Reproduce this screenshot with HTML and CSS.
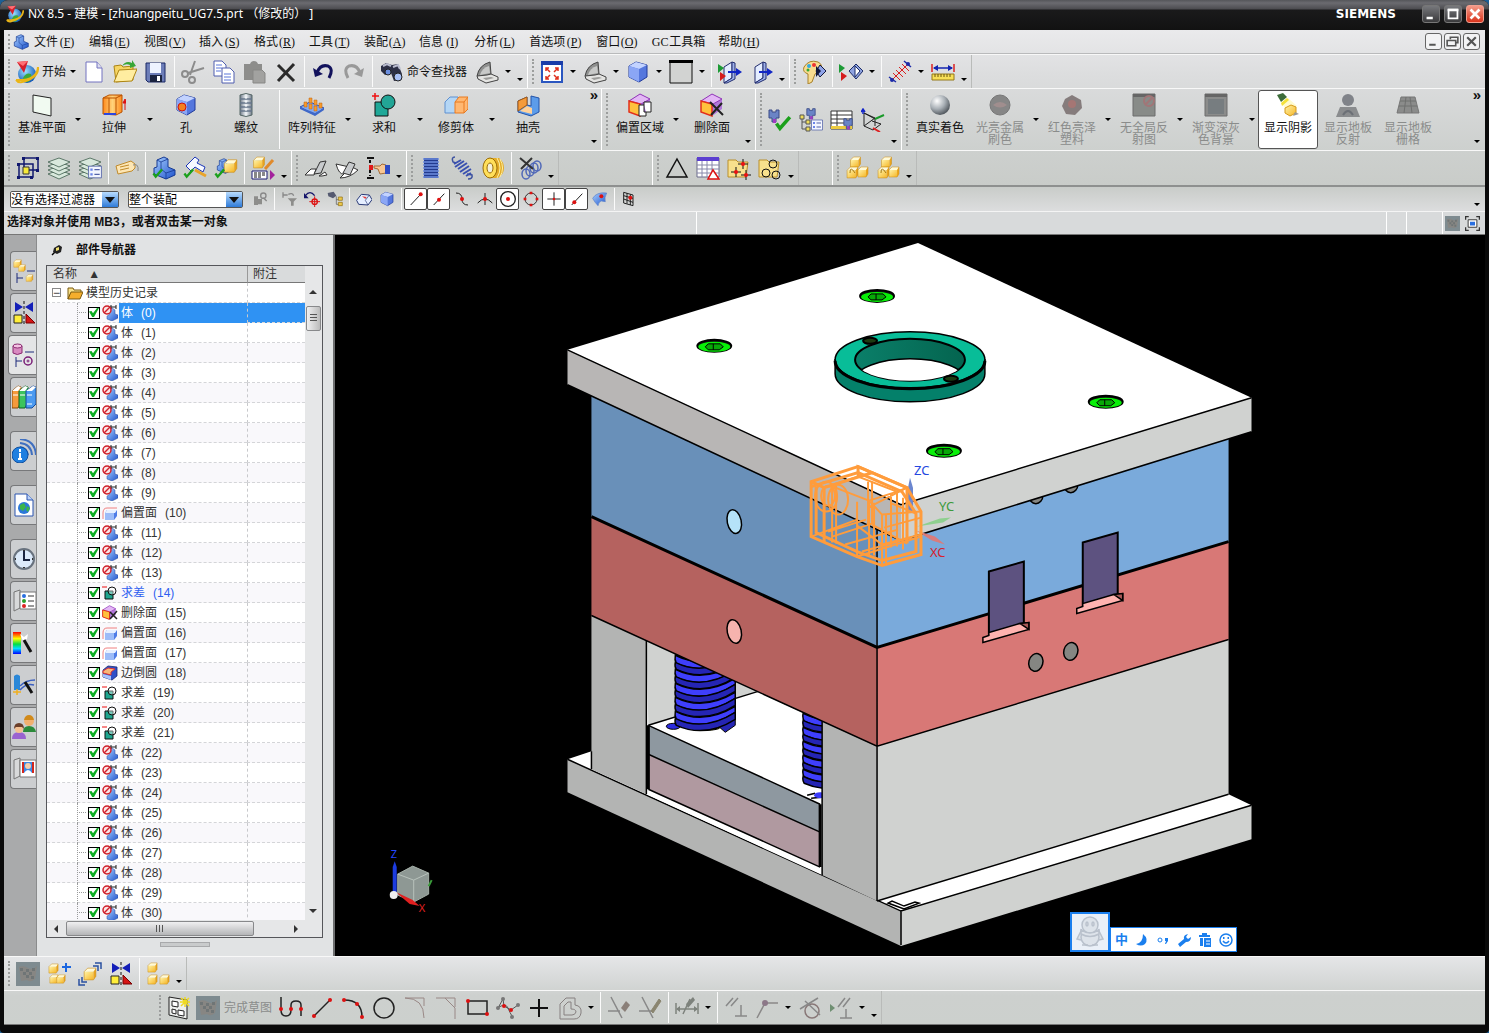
FILE: index.html
```html
<!DOCTYPE html>
<html lang="zh-CN">
<head>
    <meta charset="UTF-8">
    <meta name="viewport" content="width=device-width, initial-scale=1.0">
    <title>NX 8.5 - 建模</title>
    <link rel="stylesheet" href="styles.css">
</head>
<body>

<!-- Icon sprite -->
<svg class="sprite" aria-hidden="true">
    <defs>
        <linearGradient id="g-blue" x1="0" y1="0" x2="1" y2="1"><stop offset="0" stop-color="#a9d0ff"/><stop offset="1" stop-color="#1d52cc"/></linearGradient>
        <linearGradient id="g-gold" x1="0" y1="0" x2="1" y2="1"><stop offset="0" stop-color="#fff3a8"/><stop offset="1" stop-color="#f6b626"/></linearGradient>
        <linearGradient id="g-orange" x1="0" y1="0" x2="1" y2="0"><stop offset="0" stop-color="#ff8a1c"/><stop offset=".5" stop-color="#ffd27a"/><stop offset="1" stop-color="#ff8a1c"/></linearGradient>
        <linearGradient id="g-steel" x1="0" y1="0" x2="1" y2="0"><stop offset="0" stop-color="#6f7a88"/><stop offset=".5" stop-color="#f4f8fb"/><stop offset="1" stop-color="#6f7a88"/></linearGradient>
        <linearGradient id="g-rainbow" x1="0" y1="0" x2="0" y2="1"><stop offset="0" stop-color="#f00"/><stop offset=".3" stop-color="#ff0"/><stop offset=".55" stop-color="#0d4"/><stop offset=".75" stop-color="#0df"/><stop offset="1" stop-color="#00f"/></linearGradient>
        <radialGradient id="g-ball" cx=".35" cy=".3" r=".8"><stop offset="0" stop-color="#fff"/><stop offset=".5" stop-color="#a8afb5"/><stop offset="1" stop-color="#3c4248"/></radialGradient>
        <radialGradient id="g-globe" cx=".4" cy=".35" r=".7"><stop offset="0" stop-color="#9fe3ff"/><stop offset="1" stop-color="#0a4fb4"/></radialGradient>
    </defs>
    <symbol id="cube-y" viewBox="0 0 12 12"><path d="M1 4 4 1h7L9 4z" fill="#fffad8"/><path d="M1 4h8v7H1z" fill="url(#g-gold)"/><path d="M9 4l2-3v7L9 11z" fill="#eba51c"/><path d="M1 4 4 1h7v7l-2 3H1z" fill="none" stroke="#c98a10" stroke-width=".5"/></symbol>
    <symbol id="cube-b" viewBox="0 0 24 24"><path d="M3 6 10 2l11 3v12l-8 5-10-5z" fill="#5577dd" stroke="#203a9a"/><path d="M3 6 10 2l11 3-8 4z" fill="#c3d3ff"/><path d="M3 6l10 3v13L3 17z" fill="#8ba6f5"/></symbol>
    <symbol id="seat" viewBox="0 0 24 24"><path d="M5 4 12 1l4 2v8l7 3v5l-9 4-12-5v-6l3-1z" fill="url(#g-blue)" stroke="#173a93"/><path d="M5 4l4 2v7l5 4 9-3M14 17v6M9 6l7-3" fill="none" stroke="#173a93" stroke-width=".8"/></symbol>
    <symbol id="tick" viewBox="0 0 24 24"><path d="M2 12l5 7L21 3" fill="none" stroke="#1ba01b" stroke-width="5"/></symbol>
    <symbol id="logo" viewBox="0 0 24 24"><circle cx="12" cy="14" r="9" fill="url(#g-globe)"/><path d="M8 18q3-6 8-4 2 5-3 8-4 1-5-4z" fill="#3ba83b"/><path d="M1 20Q22 21 23 7M1 20q2 3 6 2 17-4 16-15" fill="none" stroke="#eab516" stroke-width="2"/><path d="M2 2l11-1-4 12z" fill="#d51f2c"/><path d="M2 2l6 4 5-5z" fill="#ff6f74"/></symbol>
    <symbol id="new" viewBox="0 0 24 24"><path d="M4 2h11l5 6v14H4z" fill="#fff" stroke="#7373c0"/><path d="M15 2v6h5" fill="#dde" stroke="#7373c0"/></symbol>
    <symbol id="open" viewBox="0 0 24 24"><path d="M1 6l7-1 2 2 10-1v14L3 22z" fill="#f6d564" stroke="#ac8413"/><path d="M1 22 6 10l18-1-5 12z" fill="#ffeda0" stroke="#ac8413"/><path d="M9 6q4-6 10-3V0l4 6-6 2V5q-4-2-8 1z" fill="#37a637"/></symbol>
    <symbol id="save" viewBox="0 0 24 24"><path d="M2 3h19v19H4l-2-2z" fill="#6c7db8" stroke="#1b2864"/><path d="M6 3h11v10H6z" fill="#eef3ff"/><path d="M6 15h12v7H6z" fill="#1b2440"/><path d="M13 16h3v5h-3z" fill="#fff"/></symbol>
    <symbol id="cut" viewBox="0 0 24 24"><g fill="none" stroke="#8c8c8c" stroke-width="2"><path d="M14 1 9 15M23 8 7 13"/><circle cx="4" cy="14" r="3"/><circle cx="11" cy="20" r="3"/></g></symbol>
    <symbol id="copy" viewBox="0 0 24 24"><path d="M2 1h8l4 4v11H2z" fill="#fff" stroke="#4e5cae"/><path d="M4 5h6M4 8h6M4 11h5" stroke="#5b77d9"/><path d="M10 8h8l4 4v11H10z" fill="#fff" stroke="#4e5cae"/><path d="M12 14h7M12 17h7M12 20h7" stroke="#5b77d9"/></symbol>
    <symbol id="paste" viewBox="0 0 24 24"><path d="M1 4h6q1-3 4-3t4 3h4v16H1z" fill="#8d8d8b"/><path d="M10 10h9l3 3v10H10z" fill="#a2a2a0" stroke="#878785"/></symbol>
    <symbol id="del" viewBox="0 0 24 24"><path d="M4 5l16 16M20 4 4 21" stroke="#2b2b2b" stroke-width="3" fill="none"/></symbol>
    <symbol id="undo" viewBox="0 0 24 24"><path d="M6 13Q9 4 17 6q6 3 1 12" fill="none" stroke="#12125c" stroke-width="3"/><path d="M2 8l2 9 8-3z" fill="#12125c"/></symbol>
    <symbol id="redo" viewBox="0 0 24 24"><path d="M18 13Q15 4 7 6q-6 3-1 12" fill="none" stroke="#999" stroke-width="3"/><path d="M22 8l-2 9-8-3z" fill="#999"/></symbol>
    <symbol id="finder" viewBox="0 0 24 24"><path d="M1 6l5-3 6 2 6-1 4 10-1 6-7 1-3-8-6 2-4-4z" fill="#2c2f45"/><path d="M3 6l4-2 4 2M13 7l5-2 2 4" stroke="#b9bccf" stroke-width="2" fill="none"/><circle cx="8" cy="12" r="3" fill="#6c8fe0" stroke="#222"/><circle cx="18" cy="17" r="4" fill="#a7bff5" stroke="#222"/></symbol>
    <symbol id="clam" viewBox="0 0 24 24"><path d="M2 16Q4 5 15 2l1 12-6 5z" fill="#8f908f" stroke="#444"/><path d="M5 15q2-7 9-9l1 7z" fill="#c8c9c8"/><path d="M2 16l10-1 4-1 7 3v3l-12 3-8-4z" fill="#e4e4e2" stroke="#444"/><path d="M8 18l8-1 3 1-8 2z" fill="#9b9b99"/></symbol>
    <symbol id="fit" viewBox="0 0 24 24"><path d="M2 2h20v20H2z" fill="#fff" stroke="#2a56c0" stroke-width="2"/><path d="M1 1h22v4H1z" fill="#1a3ca8"/><path d="M6 11V8h3M15 8h3v3M18 16v3h-3M9 19H6v-3M6 8l4 4M18 8l-4 4M18 19l-4-4M6 19l4-4" stroke="#e0301e" stroke-width="1.500" fill="none"/></symbol>
    <symbol id="bgbox" viewBox="0 0 24 24"><path d="M1 2h22v21H1z" fill="#d2d3d2" stroke="#111"/><path d="M0 0h24v3H0z" fill="#000"/></symbol>
    <symbol id="clip" viewBox="0 0 24 24"><path d="M6 7l8-5v16l-8 5z" fill="#e4edff" stroke="#222d6e"/><path d="M14 2l3 1v16l-8 4-3 0 8-5z" fill="#9db0ea" stroke="#222d6e"/><path d="M10 12h9" stroke="#1226c4" stroke-width="2"/><path d="M18 8l6 4-6 4z" fill="#1226c4"/></symbol>
    <symbol id="flags" viewBox="0 0 24 24"><path d="M0 4l6 4-6 5z" fill="#1c9a35"/><path d="M2 12l6 4-6 5z" fill="#d51c1c"/></symbol>
    <symbol id="palette" viewBox="0 0 24 24"><path d="M2 7q5-8 14-5 6 3 2 9l-5 3-3 8-4 2v-10Q0 12 2 7z" fill="#f8dc90" stroke="#a8812a"/><circle cx="7" cy="6" r="2" fill="#35a9e0"/><circle cx="12" cy="5" r="2" fill="#e33"/><circle cx="6" cy="10" r="1.500" fill="#3a3"/><path d="M18 5l6 6-6 6-4-6z" fill="#8fa3e8" stroke="#12183c"/><path d="M14 6l5 5-5 6z" fill="#12183c"/></symbol>
    <symbol id="diamond" viewBox="0 0 24 24"><path d="M17 4l7 7-7 8-7-8z" fill="#8ea2e0" stroke="#1c2c66"/><path d="M16 6l5 5-5 6z" fill="#fff" stroke="#1c2c66"/></symbol>
    <symbol id="measure" viewBox="0 0 24 24"><path d="M3 21 21 3" stroke="#d92020"/><path d="M5 13l7 7M8 10l7 7M11 7l7 7M14 4l7 7" stroke="#d92020"/><path d="M1 17l7 5M16 1l7 6" stroke="#1c2aa8" stroke-width="1.500"/><circle cx="4" cy="20" r="2" fill="#1c2aa8"/><circle cx="20" cy="4" r="2" fill="#1c2aa8"/></symbol>
    <symbol id="ruler" viewBox="0 0 24 24"><path d="M1 4v8M23 4v8" stroke="#d22" stroke-width="1.500"/><path d="M3 8h18" stroke="#1324b0" stroke-width="1.500"/><path d="M2 8l5-3v6zM22 8l-5-3v6z" fill="#1324b0"/><path d="M1 14h22v6H1z" fill="#f7df57" stroke="#94781a"/><path d="M4 14v3M7 14v3M10 14v3M13 14v3M16 14v3M19 14v3" stroke="#6b5510"/></symbol>
    <symbol id="plane" viewBox="0 0 24 24"><path d="M3 2l18 3v18L3 19z" fill="#f1faf1" stroke="#222"/></symbol>
    <symbol id="extrude" viewBox="0 0 24 24"><path d="M1 5l6-3h13v17l-6 3-13-1z" fill="url(#g-orange)" stroke="#b95200"/><path d="M7 5v16M14 5v17M1 5h13l6-3" stroke="#b95200" fill="none"/><path d="M2 21h12" stroke="#2b46e0" stroke-width="2"/><path d="M23 17V9M21 10l2-4 2 4z" stroke="#d11" fill="#d11"/></symbol>
    <symbol id="bolt" viewBox="0 0 24 24"><path d="M6 2q6-3 12 0v20q-6 3-12 0z" fill="url(#g-steel)" stroke="#566"/><path d="M6 6h12M6 10h12M6 14h12M6 18h12" stroke="#66758a" stroke-width="1.500"/><path d="M12 4v16" stroke="#fff" stroke-dasharray="2 2"/></symbol>
    <symbol id="array" viewBox="0 0 24 24"><path d="M0 14l10-5 14 6-9 7z" fill="#84aaf0" stroke="#2b4fb0"/><path d="M0 14l15 6 9-5v2l-9 6-15-7z" fill="#3f68c8"/><g fill="#f79a2c" stroke="#b86010" stroke-width=".5"><path d="M4 9h3v5H4zM9 5h3v5H9zM9 11h3v5H9zM14 7h3v5h-3zM14 13h3v5h-3zM19 10h3v5h-3z"/></g></symbol>
    <symbol id="unite" viewBox="0 0 24 24"><path d="M3 9h13v14H3z" fill="#1fa898" stroke="#111"/><circle cx="16" cy="9" r="7" fill="#22a596" stroke="#111"/><path d="M0 3h7M3 0v7" stroke="#e11" stroke-width="1.500"/></symbol>
    <symbol id="trim" viewBox="0 0 24 24"><path d="M1 9l5-5h8v12l-3 4H1z" fill="#b4d6f5" stroke="#5f90d0"/><path d="M11 9l4-5h9v12l-4 4h-9z" fill="#ffb872" stroke="#e87a20"/><path d="M11 9h9l4-5M20 9v11" stroke="#e87a20" fill="none"/></symbol>
    <symbol id="shell" viewBox="0 0 24 24"><path d="M2 8l9-4v8l4 1V3l8 2v14l-8 4-13-4z" fill="#5c9cea" stroke="#2352a8"/><path d="M2 8l9-4v8L2 18z" fill="#f59b3b" stroke="#a85a10"/><path d="M4 18l7-5 5 2v6z" fill="#ffd19a"/></symbol>
    <symbol id="face" viewBox="0 0 24 24"><path d="M1 8 12 1l10 5v10l-10 7-11-4z" fill="#b078d8"/><path d="M1 8 12 1l10 5-9 5z" fill="#e3b7f5" stroke="#9136b8"/><path d="M1 8l11 3v12L1 19z" fill="#ffc13c" stroke="#e22f1b" stroke-width="1.500"/></symbol>
    <symbol id="plug" viewBox="0 0 24 24"><path d="M1 2h3v2h4V2h3v8H8v4H4v-4H1z" fill="#6a84c6" stroke="#3a4b86"/><path d="M5 11h3v4H5z" fill="#a03cc0"/></symbol>
    <symbol id="sheet" viewBox="0 0 24 24"><path d="M1 3h21v18H1z" fill="#fff" stroke="#333"/><path d="M1 7h21M1 11h21M1 15h21M7 3v18" stroke="#333"/><path d="M1 18h21v3H1z" fill="#eccb3e"/></symbol>
    <symbol id="csys" viewBox="0 0 24 24"><path d="M3 5v13l11-8zM3 18l9 4 8-6-9-3M3 5l11 6v7" fill="none" stroke="#222"/><path d="M2 6V1M0 4l2-3 2 3" stroke="#1224c8" stroke-width="1.500" fill="none"/><path d="M14 11l9-4" stroke="#1a9a2a" stroke-width="2"/><path d="M12 20l7 4" stroke="#d22" stroke-width="2"/></symbol>
    <symbol id="ball" viewBox="0 0 24 24"><circle cx="12" cy="12" r="10" fill="url(#g-ball)"/></symbol>
    <symbol id="gball" viewBox="0 0 24 24"><circle cx="12" cy="12" r="10" fill="#868686" stroke="#777"/><path d="M5 12q7-6 14 0-7 5-14 0z" fill="#a08e8e"/></symbol>
    <symbol id="gred" viewBox="0 0 24 24"><path d="M12 2l9 5 1 8-7 7-9-1-4-8 3-7z" fill="#857c7c"/><circle cx="12" cy="11" r="4" fill="#a57674"/></symbol>
    <symbol id="gno" viewBox="0 0 24 24"><path d="M1 1h22v22H1z" fill="#888b88" stroke="#6d6d6d"/><path d="M1 1h22v3H1z" fill="#666"/><circle cx="17" cy="8" r="5" fill="none" stroke="#a27577" stroke-width="2"/><path d="M14 11l6-6" stroke="#a27577" stroke-width="2"/></symbol>
    <symbol id="ggrad" viewBox="0 0 24 24"><path d="M1 1h22v22H1z" fill="#8b8c8b" stroke="#6d6d6d"/><path d="M1 1h22v3H1z" fill="#666"/><path d="M4 6h16v15H4z" fill="#777d80"/></symbol>
    <symbol id="lamp" viewBox="0 0 24 24"><path d="M6 10l6-5 9 8-9 8z" fill="#fffbd0"/><path d="M1 2l6-2 4 4-6 5z" fill="#3d6d3a"/><path d="M5 10l6-5 2 2-7 6z" fill="#f4e23a"/><path d="M9 15l6-3 5 2v6l-6 3-5-3z" fill="url(#g-gold)" stroke="#d59a1a"/><path d="M17 23l6-2-4-2z" fill="#999"/></symbol>
    <symbol id="gperson" viewBox="0 0 24 24"><circle cx="12" cy="7" r="6" fill="#808389"/><path d="M4 14h16l4 10H0z" fill="#8a8c8e"/><path d="M7 22q5-8 10 0" fill="none" stroke="#6c7076" stroke-width="2"/></symbol>
    <symbol id="gfloor" viewBox="0 0 24 24"><path d="M5 4h14l4 16H1z" fill="#8b8c8b" stroke="#777"/><path d="M4 8h16M3 13h18M10 4 8 20M14 4l2 16" stroke="#6f706f"/></symbol>
    <symbol id="frames" viewBox="0 0 24 24"><path d="M8 2h14v12H8zM3 8h14v13H3z" fill="none" stroke="#10186e" stroke-width="1.500"/><path d="M7 11h6v7H7z" fill="#f7ea3a" stroke="#333"/><path d="M6 1h3v3H6zM20 1h3v3h-3zM20 13h3v3h-3zM1 7h3v3H1zM14 20h3v3h-3zM1 20h3v3H1z" fill="#10186e"/></symbol>
    <symbol id="layers" viewBox="0 0 24 24"><g fill="#d8e8dc" stroke="#3d5d4d" stroke-width=".8"><path d="M1 18l11-4 11 4-11 5z"/><path d="M1 14l11-4 11 4-11 5z"/><path d="M1 10l11-4 11 4-11 5z"/><path d="M1 6l11-4 11 4-11 5z"/></g></symbol>
    <symbol id="list" viewBox="0 0 24 24"><path d="M1 2h22v20H1z" fill="#f3f6ff" stroke="#5363a8" stroke-width="1.500"/><path d="M4 6h4v4H4zM4 14h4v4H4z" fill="#6b85e8"/><path d="M11 8h9M11 16h9" stroke="#5363a8" stroke-width="2"/></symbol>
    <symbol id="tag" viewBox="0 0 24 24"><path d="M1 10l15-5 4 3v4l-3 3-14 3z" fill="#fde6b4" stroke="#c08a2a"/><path d="M5 11l9-2M5 14l9-2" stroke="#c08a2a"/><path d="M18 9q6-2 5 6" fill="none" stroke="#888"/></symbol>
    <symbol id="hammer" viewBox="0 0 24 24"><path d="M3 10 12 1l4 3-2 3 8 4-2 5-8-5-4 4z" fill="#f7f9ff" stroke="#1c37b8"/><path d="M12 14l11 6" stroke="#e8a42a" stroke-width="3"/></symbol>
    <symbol id="abc" viewBox="0 0 24 24"><use href="#cube-y" x="1" y="0" width="14" height="13"/><path d="M1 15h15v8H1z" fill="#fff" stroke="#1a1a70"/><path d="M3 17h11M3 19h11M3 21h8" stroke="#111" stroke-dasharray="3 1"/><path d="M22 4l-8 9" stroke="#e08a2b" stroke-width="3"/><path d="M19 14l5 5-5 5z" fill="#a3219c"/></symbol>
    <symbol id="fold" viewBox="0 0 24 24"><path d="M1 19 7 13h5l-2 6z" fill="#fff" stroke="#333"/><path d="M10 18l6-12 6-1-5 12z" fill="#c8cbcd" stroke="#333"/><path d="M15 20l6-4 2 3-5 1z" fill="#fff" stroke="#333"/></symbol>
    <symbol id="fold2" viewBox="0 0 24 24"><path d="M1 8q3 11 8 10l-4 4q10 0 18-8l-4-2z" fill="#fff" stroke="#333"/><path d="M8 17 14 6l6 2-5 11z" fill="#c8cbcd" stroke="#333"/></symbol>
    <symbol id="hand" viewBox="0 0 24 24"><path d="M1 2h7M1 22h7" stroke="#111" stroke-width="2"/><path d="M4 4v16" stroke="#111" stroke-width="2" stroke-dasharray="3 2"/><path d="M3 9h4v5H3z" fill="#e01b1b"/><path d="M8 10h6l2-2 4 1v8l-6 1-2-5-4-1z" fill="#f8c795" stroke="#a56b35"/><path d="M19 9h5v9h-5z" fill="#2f4bc4"/></symbol>
    <symbol id="coil" viewBox="0 0 24 24"><path d="M5 2h14v20H5z" fill="#233b8e"/><path d="M4 3h16M4 6h16M4 9h16M4 12h16M4 15h16M4 18h16M4 21h16" stroke="#6f8ee0" stroke-width="1.500"/></symbol>
    <symbol id="coil2" viewBox="0 0 24 24"><path d="M5 1q-4 0-2 5l3 1M17 18l5 1q1 4-4 4" fill="none" stroke="#3c519f" stroke-width="1.500"/><path d="M4 8l7-4M5 11l9-6M8 13l9-6M10 16l9-6M13 18l8-5M16 20l5-3" stroke="#3a51b0" stroke-width="2"/></symbol>
    <symbol id="roll" viewBox="0 0 24 24"><path d="M8 2h10q5 4 5 10t-6 10H8z" fill="#e3ac28"/><path d="M16 2q6 10 0 20M19 3q5 9 0 18" stroke="#fff0a0" fill="none"/><ellipse cx="9" cy="12" rx="7" ry="10" fill="#ffdf5a" stroke="#9a6b06"/><ellipse cx="9" cy="12" rx="3" ry="5" fill="#f4f0d8" stroke="#9a6b06"/></symbol>
    <symbol id="nocoil" viewBox="0 0 24 24"><g fill="none" stroke="#5068b8" stroke-width="1.500"><ellipse cx="8" cy="18" rx="4" ry="5"/><ellipse cx="12" cy="15" rx="4" ry="5"/><ellipse cx="16" cy="12" rx="4" ry="5"/><ellipse cx="19" cy="10" rx="4" ry="5"/></g><path d="M2 2l13 11M14 2 3 13" stroke="#333" stroke-width="2"/></symbol>
    <symbol id="tri" viewBox="0 0 24 24"><path d="M12 3l10 18H2z" fill="none" stroke="#111" stroke-width="1.500"/></symbol>
    <symbol id="grid" viewBox="0 0 24 24"><path d="M1 2h22v19H1z" fill="#fff" stroke="#6a6a8a"/><path d="M1 1h22v4H1z" fill="#5c3fd0"/><path d="M1 9h22M1 13h22M1 17h22M6 5v16M11 5v16M16 5v16" stroke="#88a"/><path d="M17 14l6 9H12z" fill="#fff" stroke="#d11" stroke-width="1.500"/></symbol>
    <symbol id="folder" viewBox="0 0 24 24"><path d="M1 4h8l2 2h10l-2 15H1z" fill="#f8e08c" stroke="#b98f2a"/></symbol>
    <symbol id="pluses" viewBox="0 0 24 24"><path d="M16 3v10M11 8h10M9 11v10M4 16h10M19 14v10M14 19h10" stroke="#111"/><circle cx="16" cy="8" r="2" fill="#e11"/><circle cx="9" cy="16" r="2" fill="#e11"/><circle cx="19" cy="19" r="2" fill="#e11"/></symbol>
    <symbol id="rings" viewBox="0 0 24 24"><g fill="none" stroke="#111"><circle cx="15" cy="8" r="4"/><circle cx="8" cy="17" r="4"/><circle cx="18" cy="19" r="4"/></g></symbol>
    <symbol id="boxes" viewBox="0 0 24 24"><use href="#cube-y" x="4" y="0" width="13" height="12"/><use href="#cube-y" x="1" y="10" width="13" height="13"/><use href="#cube-y" x="12" y="10" width="12" height="12"/><path d="M5 17q0-8 5 0" fill="none" stroke="#a67a14"/></symbol>
    <symbol id="gtree" viewBox="0 0 24 24"><path d="M3 8h6v13H3zM9 12h6v8H9z" fill="#8d8d8b"/><circle cx="17" cy="7" r="4" fill="none" stroke="#888" stroke-width="2"/><path d="M17 10l5 5" stroke="#888" stroke-width="2"/></symbol>
    <symbol id="gfilter" viewBox="0 0 24 24"><path d="M2 6h8M3 2v8M11 5q6-3 8 2" stroke="#888" stroke-width="2" fill="none"/><path d="M10 11h14l-5 5v6h-4v-6z" fill="#8d8d8b"/></symbol>
    <symbol id="target" viewBox="0 0 24 24"><path d="M2 7Q9-2 16 7" fill="none" stroke="#15156a" stroke-width="2"/><path d="M0 3v8h7z" fill="#15156a"/><circle cx="16" cy="16" r="4" fill="none" stroke="#d11" stroke-width="2"/><path d="M16 8v16M8 16h16" stroke="#d11" stroke-width="1.500"/></symbol>
    <symbol id="find2" viewBox="0 0 24 24"><path d="M1 3l9-2 4 6-5 4-7-3z" fill="#555a70"/><path d="M14 8v12h4M14 13h4" stroke="#555" fill="none"/><path d="M17 9h6v5h-6zM17 17h6v5h-6z" fill="#edc84a" stroke="#8a6a10"/></symbol>
    <symbol id="roof" viewBox="0 0 24 24"><path d="M1 14l7-9 12 1 4 7-6 8-14-1z" fill="#e6efff" stroke="#2b3b78" stroke-width="1.500"/><path d="M14 14l6-8M14 14l4 7" stroke="#2b3b78" fill="none"/><path d="M9 8l7 1-2 3z" fill="#e04040"/></symbol>
    <symbol id="curve" viewBox="0 0 24 24"><path d="M3 3q9 0 9 9t9 9" fill="none" stroke="#222" stroke-width="1.500"/><circle cx="12" cy="12" r="3" fill="#d11"/></symbol>
    <symbol id="cross" viewBox="0 0 24 24"><path d="M1 18q11-12 22 0M12 3v18" fill="none" stroke="#222" stroke-width="1.500"/><circle cx="12" cy="12" r="3" fill="#d11"/></symbol>
    <symbol id="line-e" viewBox="0 0 24 24"><path d="M4 21 19 5" stroke="#222" stroke-width="1.500"/><circle cx="19" cy="5" r="3" fill="#d11"/></symbol>
    <symbol id="line-m" viewBox="0 0 24 24"><path d="M4 21 20 4" stroke="#222" stroke-width="1.500"/><circle cx="12" cy="13" r="3" fill="#d11"/></symbol>
    <symbol id="line-s" viewBox="0 0 24 24"><path d="M4 21 20 4" stroke="#222" stroke-width="1.500"/><circle cx="8" cy="17" r="3" fill="#d11"/></symbol>
    <symbol id="cent" viewBox="0 0 24 24"><circle cx="12" cy="12" r="11" fill="none" stroke="#222" stroke-width="2"/><circle cx="12" cy="12" r="3" fill="#d11"/></symbol>
    <symbol id="quad" viewBox="0 0 24 24"><circle cx="12" cy="12" r="9" fill="none" stroke="#333" stroke-width="1.500"/><path d="M10 1h4v4h-4zM10 19h4v4h-4zM1 10h4v4H1zM19 10h4v4h-4z" fill="#d11"/></symbol>
    <symbol id="plus" viewBox="0 0 24 24"><path d="M12 2v20M2 12h20" stroke="#222" stroke-width="1.500"/><circle cx="12" cy="12" r="2" fill="#d11"/></symbol>
    <symbol id="patch" viewBox="0 0 24 24"><path d="M1 11q6-10 21-8-4 7-2 13l-6-1q-4 1-5 7-5-5-8-11z" fill="url(#g-blue)" stroke="#5a80c8"/><circle cx="14" cy="8" r="3" fill="#d11"/></symbol>
    <symbol id="mesh" viewBox="0 0 24 24"><path d="M4 2l14 4v16L4 18zM4 7l14 4M4 12l14 5M9 3v16M14 5v16" fill="none" stroke="#222" stroke-width="1.500"/><circle cx="14" cy="10" r="3" fill="#d11"/></symbol>
    <symbol id="gflag" viewBox="0 0 24 24"><path d="M0 0h24v24H0z" fill="#7e8b90"/><path d="M3 5q5-2 9 1t9-2l-2 13q-5 4-8 1l-6 1z" fill="#878683"/><path d="M4 6h3v3H4zM10 7h3v3h-3zM16 6h3v3h-3zM7 10h3v3H7zM13 10h3v3h-3zM10 13h3v3h-3zM15 14h3v3h-3z" fill="#6f7576"/></symbol>
    <symbol id="full" viewBox="0 0 24 24"><path d="M1 6V1h5M18 1h5v5M23 18v5h-5M6 23H1v-5" fill="none" stroke="#333" stroke-width="2"/><path d="M5 6h14v12H5z" fill="#fff" stroke="#333" stroke-width="1.500"/><path d="M8 9h8v6H8z" fill="#2a6fe0"/></symbol>
    <symbol id="asmtree" viewBox="0 0 24 24"><use href="#cube-y" x="1" y="0" width="9" height="9"/><use href="#cube-y" x="6" y="5" width="8" height="8"/><use href="#cube-y" x="13" y="15" width="9" height="8"/><path d="M15 12h8M5 14v10M5 19h6" stroke="#1c2a7a"/></symbol>
    <symbol id="mirror" viewBox="0 0 24 24"><path d="M3 1v10l8-5zM21 1v10l-8-5z" fill="#141fb8"/><path d="M2 14h8v8H2z" fill="#ffee3a" stroke="#222"/><path d="M14 13l9 9h-9z" fill="#d61414" stroke="#700"/><path d="M12 0v24" stroke="#111" stroke-dasharray="3 2"/></symbol>
    <symbol id="parttree" viewBox="0 0 24 24"><path d="M2 3v7q4 3 9 0V3z" fill="#d88ac0" stroke="#8a2a70"/><ellipse cx="6.500" cy="3" rx="4.500" ry="2" fill="#f3c3e3" stroke="#8a2a70"/><path d="M14 9h9M5 14v10M5 18h6" stroke="#1c2a7a"/><circle cx="17" cy="18" r="4" fill="none" stroke="#7a1f78" stroke-width="1.500"/><circle cx="17" cy="18" r="1" fill="none" stroke="#7a1f78"/></symbol>
    <symbol id="books" viewBox="0 0 24 24"><path d="M0 6l6-5 3 1v15l-3 6H0z" fill="#f59a3c" stroke="#8a4a08"/><path d="M7 6l6-5 3 1v15l-3 6H7z" fill="#3cc45c" stroke="#0c6020"/><path d="M14 6l7-5 3 1v17l-4 4h-6z" fill="#4b9af0" stroke="#144a9a"/><path d="M0 6l6-5 3 1-3 4zM7 6l6-5 3 1-3 4zM14 6l7-5 3 1-4 4z" fill="#fff"/><path d="M1 10h5M8 10h5M15 10h5M15 19h5" stroke="#fff"/></symbol>
    <symbol id="info" viewBox="0 0 24 24"><path d="M8 4q11 1 12 12M8 0q15 1 16 16M8 8q7 1 8 8" fill="none" stroke="#3f6fc0" stroke-width="2"/><circle cx="8" cy="16" r="8" fill="#1f7fe0" stroke="#1150a0"/><path d="M8 10v3M8 14v6M6 20h4" stroke="#fff" stroke-width="2"/></symbol>
    <symbol id="web" viewBox="0 0 24 24"><path d="M3 1h12l6 6v16H3z" fill="#fff" stroke="#2a55b0"/><path d="M15 1v6h6" fill="#bcd2f8" stroke="#2a55b0"/><circle cx="12" cy="15" r="6" fill="#2b78d8"/><path d="M8 12l4-2 2 4-3 4-3-2zM15 13l3 2-2 4-2-2z" fill="#3bb54a"/></symbol>
    <symbol id="clock" viewBox="0 0 24 24"><circle cx="12" cy="12" r="10" fill="#dceafa" stroke="#68727e" stroke-width="2"/><path d="M12 4v9h6" fill="none" stroke="#1a2440" stroke-width="2"/><path d="M12 3v1M12 20v1M3 12h1M20 12h1" stroke="#333" stroke-width="2"/></symbol>
    <symbol id="roles" viewBox="0 0 24 24"><path d="M2 3l6-2v18l-6 3z" fill="#d8d9da" stroke="#777"/><path d="M8 3h16v17H8z" fill="#fff" stroke="#777"/><circle cx="12" cy="7" r="2" fill="#2a6fe0"/><circle cx="12" cy="12" r="2" fill="#2ba02b"/><circle cx="12" cy="17" r="2" fill="#d22"/><path d="M16 7h6M16 12h6M16 17h6" stroke="#333"/></symbol>
    <symbol id="rainbow" viewBox="0 0 24 24"><path d="M1 1h8v22H1z" fill="url(#g-rainbow)"/><path d="M8 3l4 3 4-3-1 5-4 2z" fill="#fff"/><path d="M12 9l7 12" stroke="#111" stroke-width="3"/></symbol>
    <symbol id="wand" viewBox="0 0 24 24"><path d="M2 3q3-3 6 0v14H2z" fill="#2b88d8"/><path d="M8 13q6-6 15-6M8 17q6-7 14-5" stroke="#3b5fc0" fill="none" stroke-width="1.500"/><path d="M1 19h8M5 16v6" stroke="#f0b020" stroke-width="1.500"/><path d="M13 9l7 11" stroke="#111" stroke-width="3"/></symbol>
    <symbol id="people" viewBox="0 0 24 24"><path d="M11 17q0-6 6-6t7 6z" fill="#2b8a3a"/><circle cx="17" cy="6" r="5" fill="#f1b070"/><path d="M12 5q1-5 5-5t5 5z" fill="#d18a1a"/><path d="M0 24q0-7 7-7t7 7z" fill="#9a63d0"/><circle cx="7" cy="14" r="4" fill="#f3c092"/><path d="M2 14q0-6 5-6t5 6l-2-2H4z" fill="#6b3f2a"/></symbol>
    <symbol id="photo" viewBox="0 0 24 24"><path d="M2 3l6-2v18l-6 3z" fill="#d8d9da" stroke="#777"/><path d="M8 3h16v17H8z" fill="#fff" stroke="#777"/><path d="M10 5h12v11H10z" fill="#d2281f"/><path d="M12 5h8v11h-8z" fill="#3b8ae6"/><circle cx="16" cy="9" r="3" fill="#f1d0b0"/><path d="M12 16q4-6 8 0z" fill="#fff"/></symbol>
    <symbol id="addc" viewBox="0 0 24 24"><use href="#cube-y" x="1" y="1" width="11" height="11"/><use href="#cube-y" x="2" y="12" width="10" height="10"/><use href="#cube-y" x="9" y="12" width="10" height="10"/><path d="M19 1v9M15 5h9" stroke="#1b66e0" stroke-width="2"/></symbol>
    <symbol id="movec" viewBox="0 0 24 24"><use href="#cube-y" x="5" y="5" width="14" height="14"/><path d="M17 1h6v6M15 4h5v5M1 17v6h6M4 15v5h5" stroke="#2a50a0" stroke-width="1.500" fill="none"/></symbol>
    <symbol id="three" viewBox="0 0 24 24"><use href="#cube-y" x="1" y="0" width="11" height="11"/><use href="#cube-y" x="1" y="12" width="11" height="11"/><use href="#cube-y" x="13" y="12" width="11" height="11"/></symbol>
    <symbol id="sketch" viewBox="0 0 24 24"><path d="M2 1l18 3v19L2 19z" fill="#eef0ee" stroke="#222"/><path d="M5 5l6 1v5l-6-1zM5 13l4 1v4l-4-1zM11 14l6 1v5l-6-1z" fill="#fff" stroke="#222"/><path d="M18 1v10M13 6h10M14 2l8 8M22 2l-8 8" stroke="#f0da20" stroke-width="1.500"/></symbol>
    <symbol id="profile" viewBox="0 0 24 24"><path d="M2 1v13q0 6 5 6t5-6V9q0-4 5-4t5 4v11" fill="none" stroke="#222" stroke-width="1.500"/><g fill="#d11"><circle cx="2" cy="13" r="2"/><circle cx="12" cy="13" r="2"/><circle cx="22" cy="13" r="2"/></g></symbol>
    <symbol id="sline" viewBox="0 0 24 24"><path d="M3 21 21 3" stroke="#222" stroke-width="1.500"/><circle cx="4" cy="20" r="2" fill="#d11"/><circle cx="20" cy="4" r="2" fill="#d11"/></symbol>
    <symbol id="sarc" viewBox="0 0 24 24"><path d="M3 4q18 0 18 17" fill="none" stroke="#222" stroke-width="1.500"/><g fill="#d11"><circle cx="3" cy="4" r="2"/><circle cx="16" cy="8" r="2"/><circle cx="21" cy="21" r="2"/></g></symbol>
    <symbol id="scirc" viewBox="0 0 24 24"><circle cx="12" cy="12" r="10" fill="none" stroke="#222" stroke-width="1.500"/></symbol>
    <symbol id="gfillet" viewBox="0 0 24 24"><path d="M2 2q19 0 19 20M2 2h19v8" fill="none" stroke="#998886"/></symbol>
    <symbol id="gchamf" viewBox="0 0 24 24"><path d="M2 2h9l10 10v11M11 2h10v9" fill="none" stroke="#998886"/></symbol>
    <symbol id="srect" viewBox="0 0 24 24"><path d="M3 5h19v13H3z" fill="none" stroke="#222" stroke-width="1.500"/><circle cx="3" cy="5" r="2" fill="#d11"/><circle cx="22" cy="18" r="2" fill="#d11"/></symbol>
    <symbol id="spline" viewBox="0 0 24 24"><path d="M2 12 7 3l1 7 7 4 7-5M3 11q7-4 9 1t4 8" fill="none" stroke="#555"/><g fill="#777"><circle cx="2" cy="12" r="2"/><circle cx="7" cy="3" r="2"/><circle cx="22" cy="9" r="2"/><circle cx="16" cy="21" r="2"/></g><circle cx="8" cy="10" r="2" fill="#d11"/><circle cx="15" cy="14" r="2" fill="#d11"/></symbol>
    <symbol id="splus" viewBox="0 0 24 24"><path d="M12 3v18M3 12h18" stroke="#111" stroke-width="2"/></symbol>
    <symbol id="goff" viewBox="0 0 24 24"><path d="M2 23V8l6-6h9v7q7 1 6 8-1 6-7 6zM6 19v-9l4-4h3v7q5 0 5 3-1 3-4 3z" fill="none" stroke="#868080"/></symbol>
    <symbol id="gtrim" viewBox="0 0 24 24"><path d="M4 1l11 21M1 15h12" stroke="#888" stroke-width="1.500"/><path d="M14 12l5-7 4 4-5 7z" fill="#8a7f78"/></symbol>
    <symbol id="gext" viewBox="0 0 24 24"><path d="M4 1l11 21M1 15h13" stroke="#888" stroke-width="1.500"/><path d="M13 15 21 3l2 2-8 12z" fill="#8a8570" stroke="#8a8570"/></symbol>
    <symbol id="gdim" viewBox="0 0 24 24"><path d="M1 7v11M23 7v11M2 13h20M8 18l7-15" stroke="#7d827c" stroke-width="1.500" fill="none"/><path d="M1 13l4-3v6zM23 13l-4-3v6zM11 8l7-7 2 3-7 8z" fill="#7d827c"/></symbol>
    <symbol id="gpar" viewBox="0 0 24 24"><path d="M2 10l7-8M7 10l7-8M17 9v11M11 20h12" stroke="#888" stroke-width="1.500"/></symbol>
    <symbol id="gpt" viewBox="0 0 24 24"><path d="M2 22 10 7h13" fill="none" stroke="#8a8888" stroke-width="1.500"/><circle cx="10" cy="7" r="3" fill="#8c7888"/></symbol>
    <symbol id="gtan" viewBox="0 0 24 24"><circle cx="14" cy="15" r="7" fill="none" stroke="#877" stroke-width="1.500"/><path d="M2 13 20 2M7 5l15 14" stroke="#888" stroke-width="1.500"/></symbol>
    <symbol id="gauto" viewBox="0 0 24 24"><path d="M1 8l5 4-5 4z" fill="#6f8f72"/><path d="M9 11l7-9M14 11l7-9M17 13v9M11 22h12" stroke="#888" stroke-width="1.500"/></symbol>
    <symbol id="body" viewBox="0 0 16 16"><path d="M7 4l3-1 3 2v4l3 1v3l-6 3-5-2v-3l2-1z" fill="url(#g-blue)" stroke="#2a4a9a" stroke-width=".5"/><path d="M8 2h6M14 0v4M9 0v4" stroke="#222"/><circle cx="5" cy="5" r="4" fill="#fbe4e4" stroke="#cf1f2a" stroke-width="1.500"/><path d="M2 8l6-6" stroke="#cf1f2a" stroke-width="1.500"/></symbol>
    <symbol id="offset" viewBox="0 0 16 16"><path d="M3 8l2-3h10v6l-3 4H3z" fill="#4f7ce6"/><path d="M3 8l2-3h10l-2 3z" fill="#e8f0ff"/><path d="M3 8h9v7H3z" fill="#9dbcf8"/><path d="M1 14V8q0-5 4-5h10" fill="none" stroke="#f08080"/></symbol>
    <symbol id="sub" viewBox="0 0 16 16"><path d="M0 2h5" stroke="#e11"/><path d="M3 6h8v8H3z" fill="#1fa58e" stroke="#111"/><circle cx="10" cy="6" r="4" fill="#fff" fill-opacity=".4" stroke="#111"/></symbol>
    <symbol id="delface" viewBox="0 0 16 16"><use href="#face" width="15" height="15"/><path d="M8 7l7 7M15 6l-7 8" stroke="#222" stroke-width="1.500"/></symbol>
    <symbol id="blend" viewBox="0 0 16 16"><path d="M1 5l5-4 9 1v9l-5 4-9-3z" fill="#2f4fc8" stroke="#1a2a70" stroke-width=".8"/><path d="M1 6l5-3 7 1-4 3v3L1 8z" fill="#f7b878" stroke="#d33"/><path d="M1 9l8 2v4l-8-3z" fill="#a8c4ff"/></symbol>
</svg>

<div class="window">
    <header class="titlebar">
        <svg class="app-icon"><use href="#logo"/></svg>
        <h1>NX 8.5 - 建模 - [zhuangpeitu_UG7.5.prt （修改的） ]</h1>
        <span class="brand">SIEMENS</span>
        <div class="win-buttons">
            <button aria-label="最小化"><svg viewBox="0 0 18 18"><path d="M4 12h7v3H4z" fill="#fff"/></svg></button>
            <button aria-label="最大化"><svg viewBox="0 0 18 18"><path d="M4 4h10v10H4z" fill="none" stroke="#fff" stroke-width="2"/><path d="M3 3h12v3H3z" fill="#fff"/></svg></button>
            <button class="close" aria-label="关闭"><svg viewBox="0 0 18 18"><path d="M4 4l10 10M14 4 4 14" stroke="#fff" stroke-width="3"/></svg></button>
        </div>
    </header>

    <div class="top-bars">
        <!-- Menu -->
        <nav class="menubar">
            <span class="grip"></span>
            <svg class="menu-icon"><use href="#seat"/></svg>
            <a href="#">文件<span>(<u>F</u>)</span></a>
            <a href="#">编辑<span>(<u>E</u>)</span></a>
            <a href="#">视图<span>(<u>V</u>)</span></a>
            <a href="#">插入<span>(<u>S</u>)</span></a>
            <a href="#">格式<span>(<u>R</u>)</span></a>
            <a href="#">工具<span>(<u>T</u>)</span></a>
            <a href="#">装配<span>(<u>A</u>)</span></a>
            <a href="#">信息<span>(<u>I</u>)</span></a>
            <a href="#">分析<span>(<u>L</u>)</span></a>
            <a href="#">首选项<span>(<u>P</u>)</span></a>
            <a href="#">窗口<span>(<u>O</u>)</span></a>
            <a href="#"><span>GC</span>工具箱</a>
            <a href="#">帮助<span>(<u>H</u>)</span></a>
            <div class="mdi-buttons">
                <button aria-label="最小化"><svg viewBox="0 0 14 14"><path d="M3 9h6v2H3z"/></svg></button>
                <button aria-label="还原"><svg viewBox="0 0 14 14"><path d="M5 5V3h7v5h-2M2 6h8v5H2z" fill="none" stroke="#555" stroke-width="1.500"/></svg></button>
                <button aria-label="关闭"><svg viewBox="0 0 14 14"><path d="M3 3l8 8M11 3l-8 8" stroke="#555" stroke-width="2"/></svg></button>
            </div>
        </nav>

        <!-- Standard / view / utility -->
        <div class="bar">
            <div class="group">
                <span class="grip"></span>
                <button class="text-btn start"><svg><use href="#logo"/></svg>开始<i></i></button>
                <button class="tb" title="新建"><svg><use href="#new"/></svg></button>
                <button class="tb" title="打开"><svg><use href="#open"/></svg></button>
                <button class="tb" title="保存"><svg><use href="#save"/></svg></button>
                <span class="sep"></span>
                <button class="tb" title="剪切"><svg><use href="#cut"/></svg></button>
                <button class="tb" title="复制"><svg><use href="#copy"/></svg></button>
                <button class="tb" title="粘贴"><svg><use href="#paste"/></svg></button>
                <button class="tb" title="删除"><svg><use href="#del"/></svg></button>
                <span class="sep"></span>
                <button class="tb" title="撤消"><svg><use href="#undo"/></svg></button>
                <button class="tb" title="重做"><svg><use href="#redo"/></svg></button>
                <span class="sep"></span>
                <button class="text-btn find"><svg><use href="#finder"/></svg>命令查找器</button>
                <button class="tb" title="触控"><svg><use href="#clam"/></svg></button>
                <button class="drop" aria-label="更多"></button>
                <button class="drop more" aria-label="工具条选项"></button>
            </div>
            <div class="group">
                <span class="grip"></span>
                <button class="tb" title="适合窗口"><svg><use href="#fit"/></svg></button>
                <button class="drop" aria-label="更多"></button>
                <button class="tb" title="定向"><svg><use href="#clam"/></svg></button>
                <button class="drop" aria-label="更多"></button>
                <button class="tb" title="着色"><svg><use href="#cube-b"/></svg></button>
                <button class="drop" aria-label="更多"></button>
                <button class="tb" title="背景"><svg><use href="#bgbox"/></svg></button>
                <button class="drop" aria-label="更多"></button>
                <span class="sep"></span>
                <button class="tb" title="剪切截面"><svg><use href="#clip"/><use href="#flags"/></svg></button>
                <button class="tb" title="编辑截面"><svg><use href="#clip"/></svg></button>
                <button class="drop more" aria-label="工具条选项"></button>
            </div>
            <div class="group">
                <span class="grip"></span>
                <button class="tb" title="编辑对象显示"><svg><use href="#palette"/></svg></button>
                <span class="sep"></span>
                <button class="tb" title="隐藏"><svg><use href="#flags"/><use href="#diamond"/></svg></button>
                <button class="drop" aria-label="更多"></button>
                <span class="sep"></span>
                <button class="tb" title="测量距离"><svg><use href="#measure"/></svg></button>
                <button class="drop" aria-label="更多"></button>
                <button class="tb" title="标尺"><svg><use href="#ruler"/></svg></button>
                <button class="drop more" aria-label="工具条选项"></button>
            </div>
        </div>

        <!-- Feature toolbar -->
        <div class="bar tall">
            <div class="group">
                <span class="grip"></span>
                <button class="big"><svg><use href="#plane"/></svg><span>基准平面</span></button>
                <button class="drop" aria-label="更多"></button>
                <button class="big"><svg><use href="#extrude"/></svg><span>拉伸</span></button>
                <button class="drop" aria-label="更多"></button>
                <button class="big"><svg viewBox="0 0 24 24"><use href="#cube-b"/><circle cx="8" cy="14" r="4" fill="#f2801f" stroke="#c11"/></svg><span>孔</span></button>
                <button class="big"><svg><use href="#bolt"/></svg><span>螺纹</span></button>
                <span class="sep"></span>
                <button class="big"><svg><use href="#array"/></svg><span>阵列特征</span></button>
                <button class="drop" aria-label="更多"></button>
                <button class="big"><svg><use href="#unite"/></svg><span>求和</span></button>
                <button class="drop" aria-label="更多"></button>
                <button class="big"><svg><use href="#trim"/></svg><span>修剪体</span></button>
                <button class="drop" aria-label="更多"></button>
                <button class="big"><svg><use href="#shell"/></svg><span>抽壳</span></button>
                <button class="drop more chevron" aria-label="工具条选项">»</button>
            </div>
            <div class="group">
                <span class="grip"></span>
                <button class="big"><svg viewBox="0 0 24 24"><use href="#face"/><path d="M11 12h5v-3h7v10h-5v4h-7zM16 12v7h2" fill="#fff" stroke="#222"/></svg><span>偏置区域</span></button>
                <button class="drop" aria-label="更多"></button>
                <button class="big"><svg viewBox="0 0 24 24"><use href="#face"/><path d="M10 9l13 13M22 10 11 22" stroke="#222" stroke-width="2"/></svg><span>删除面</span></button>
                <button class="drop more" aria-label="工具条选项"></button>
            </div>
            <div class="group">
                <span class="grip"></span>
                <button class="tb" title="检查"><svg viewBox="0 0 24 24"><use href="#plug"/><use href="#tick" x="7" y="7" width="17" height="17"/></svg></button>
                <button class="tb" title="属性"><svg viewBox="0 0 24 24"><path d="M3 7v14h5M3 14h5" stroke="#555" fill="none"/><path d="M1 7h4v4H1zM7 12h4v4H7zM7 19h4v4H7z" fill="#f0de5a" stroke="#555"/><use href="#list" x="12" y="10" width="12" height="14"/><use href="#plug" x="7" y="-1" width="20" height="20"/></svg></button>
                <button class="tb" title="表格"><svg viewBox="0 0 24 24"><use href="#sheet"/><use href="#plug" x="13" y="9" width="20" height="20"/></svg></button>
                <button class="tb" title="坐标系"><svg><use href="#csys"/></svg></button>
                <button class="drop more" aria-label="工具条选项"></button>
            </div>
            <div class="group last">
                <span class="grip"></span>
                <button class="big"><svg><use href="#ball"/></svg><span>真实着色</span></button>
                <button class="big" disabled><svg><use href="#gball"/></svg><span>光亮金属刷色</span></button>
                <button class="drop" aria-label="更多"></button>
                <button class="big" disabled><svg><use href="#gred"/></svg><span>红色亮泽塑料</span></button>
                <button class="drop" aria-label="更多"></button>
                <button class="big" disabled><svg><use href="#gno"/></svg><span>无全局反射图</span></button>
                <button class="drop" aria-label="更多"></button>
                <button class="big" disabled><svg><use href="#ggrad"/></svg><span>渐变深灰色背景</span></button>
                <button class="drop" aria-label="更多"></button>
                <button class="big on" aria-pressed="true"><svg><use href="#lamp"/></svg><span>显示阴影</span></button>
                <button class="big" disabled><svg><use href="#gperson"/></svg><span>显示地板反射</span></button>
                <button class="big" disabled><svg><use href="#gfloor"/></svg><span>显示地板栅格</span></button>
                <button class="drop more chevron" aria-label="工具条选项">»</button>
            </div>
        </div>

        <!-- Tools -->
        <div class="bar tools">
            <div class="group">
                <span class="grip"></span>
                <button class="tb" title="视图布局"><svg><use href="#frames"/></svg></button>
                <button class="tb" title="图层设置"><svg><use href="#layers"/></svg></button>
                <button class="tb" title="图层类别"><svg viewBox="0 0 24 24"><use href="#layers"/><use href="#list" x="10" y="8" width="14" height="16"/></svg></button>
                <span class="sep"></span>
                <button class="tb" title="标签"><svg><use href="#tag"/></svg></button>
                <span class="sep"></span>
                <button class="tb" title="检查部件"><svg viewBox="0 0 24 24"><use href="#seat"/><use href="#tick" x="0" y="12" width="12" height="11"/></svg></button>
                <button class="tb" title="检查刀具"><svg viewBox="0 0 24 24"><use href="#hammer"/><use href="#tick" x="0" y="12" width="12" height="11"/></svg></button>
                <button class="tb" title="检查装配"><svg viewBox="0 0 24 24"><use href="#seat" x="2" width="16" height="20"/><use href="#cube-y" x="9" y="1" width="15" height="18"/><use href="#tick" x="0" y="12" width="12" height="11"/></svg></button>
                <span class="sep"></span>
                <button class="tb" title="文本"><svg><use href="#abc"/></svg></button>
                <button class="drop more" aria-label="工具条选项"></button>
            </div>
            <div class="group">
                <span class="grip"></span>
                <button class="tb" title="展开"><svg><use href="#fold"/></svg></button>
                <button class="tb" title="折叠"><svg><use href="#fold2"/></svg></button>
                <button class="tb" title="调整"><svg><use href="#hand"/></svg></button>
                <button class="drop more" aria-label="工具条选项"></button>
            </div>
            <div class="group">
                <span class="grip"></span>
                <button class="tb" title="压缩弹簧"><svg><use href="#coil"/></svg></button>
                <button class="tb" title="拉伸弹簧"><svg><use href="#coil2"/></svg></button>
                <button class="tb" title="碟形弹簧"><svg><use href="#roll"/></svg></button>
                <span class="sep"></span>
                <button class="tb" title="删除弹簧"><svg><use href="#nocoil"/></svg></button>
                <button class="drop more" aria-label="工具条选项"></button>
            </div>
            <div class="group apart-wide">
                <span class="grip"></span>
                <button class="tb" title="三角"><svg><use href="#tri"/></svg></button>
                <button class="tb" title="数据表"><svg><use href="#grid"/></svg></button>
                <button class="tb" title="点集"><svg><use href="#folder"/><use href="#pluses"/></svg></button>
                <button class="tb" title="圆集"><svg><use href="#folder"/><use href="#rings"/></svg></button>
                <button class="drop more" aria-label="工具条选项"></button>
            </div>
            <div class="group apart">
                <span class="grip"></span>
                <button class="tb" title="装配"><svg><use href="#boxes"/></svg></button>
                <button class="tb" title="爆炸图"><svg><use href="#boxes"/></svg></button>
                <button class="drop more" aria-label="工具条选项"></button>
            </div>
        </div>
    </div>

    <!-- Selection bar -->
    <div class="selection-bar">
        <span class="combo"><select aria-label="类型过滤器"><option>没有选择过滤器</option></select></span>
        <span class="combo wide"><select aria-label="选择范围"><option>整个装配</option></select></span>
        <button title="细节过滤"><svg><use href="#gtree"/></svg></button>
        <span class="sep"></span>
        <button title="过滤"><svg><use href="#gfilter"/></svg></button>
        <button title="重置过滤器"><svg><use href="#target"/></svg></button>
        <button title="查找"><svg><use href="#find2"/></svg></button>
        <span class="sep"></span>
        <button title="面"><svg><use href="#roof"/></svg></button>
        <button title="体"><svg><use href="#cube-b"/></svg></button>
        <span class="sep"></span>
        <button class="on" title="端点"><svg><use href="#line-e"/></svg></button>
        <button class="on" title="中点"><svg><use href="#line-m"/></svg></button>
        <button title="控制点"><svg><use href="#curve"/></svg></button>
        <button title="交点"><svg><use href="#cross"/></svg></button>
        <button class="on" title="圆心"><svg><use href="#cent"/></svg></button>
        <button title="象限点"><svg><use href="#quad"/></svg></button>
        <button class="on" title="现有点"><svg><use href="#plus"/></svg></button>
        <button class="on" title="曲线上的点"><svg><use href="#line-s"/></svg></button>
        <button title="面上的点"><svg><use href="#patch"/></svg></button>
        <span class="sep"></span>
        <button title="栅格点"><svg><use href="#mesh"/></svg></button>
        <button class="drop more end" aria-label="工具条选项"></button>
    </div>

    <div class="prompt-bar">
        <strong>选择对象并使用 MB3，或者双击某一对象</strong>
        <span class="status"></span>
        <span class="cell"></span>
        <span class="cell cell-wide"></span>
        <span class="cell-icons"><svg><use href="#gflag"/></svg><svg><use href="#full"/></svg></span>
    </div>

    <main class="work">
        <div class="dock">
            <button title="装配导航器"><svg><use href="#asmtree"/></svg></button>
            <button title="约束导航器"><svg><use href="#mirror"/></svg></button>
            <button class="active" title="部件导航器"><svg><use href="#parttree"/></svg></button>
            <button title="重用库"><svg><use href="#books"/></svg></button>
            <button class="spaced" title="HD3D 工具"><svg><use href="#info"/></svg></button>
            <button class="spaced" title="Web 浏览器"><svg><use href="#web"/></svg></button>
            <button class="spaced" title="历史记录"><svg><use href="#clock"/></svg></button>
            <button title="角色"><svg><use href="#roles"/></svg></button>
            <button title="系统材料"><svg><use href="#rainbow"/></svg></button>
            <button title="加工向导"><svg><use href="#wand"/></svg></button>
            <button title="用户"><svg><use href="#people"/></svg></button>
            <button title="系统场景"><svg><use href="#photo"/></svg></button>
        </div>

        <section class="navigator">
            <h2><svg viewBox="0 0 12 12"><path d="M1 11l3-3" stroke="#000" stroke-width="1.500"/><path d="M3 4l5-3 3 2-1 5-4 2-4-2z" fill="#222"/><path d="M5 4l3-1v3l-3 1z" fill="#f0e070"/></svg>部件导航器</h2>
            <div class="tree-box">
                <div class="tree-view">
                    <table>
                        <colgroup><col class="col-name"><col></colgroup>
                        <thead><tr><th>名称 <span class="sort">▲</span></th><th>附注</th></tr></thead>
                        <tbody id="tree">
                            <tr>
                                <td><div class="root"><button aria-label="折叠">−</button><svg viewBox="0 0 16 16"><path d="M1 3h5l1 2h7v3H4L1 14z" fill="#f8e28a" stroke="#7a5a10"/><path d="M1 14l3-7h12l-3 7z" fill="#f5ae2c" stroke="#7a5a10"/></svg>模型历史记录</div></td>
                                <td></td>
                            </tr>
                        </tbody>
                    </table>
                </div>
                <div class="scroll-v" aria-hidden="true"><i class="up"></i><b></b><i class="down"></i></div>
                <div class="scroll-h" aria-hidden="true"><i class="left"></i><b></b><i class="right"></i></div>
            </div>
            <div class="splitter"><span></span></div>
        </section>

        <section class="viewport">
            <svg class="model" viewBox="335 235 1150 722" preserveAspectRatio="xMidYMid meet" role="img" aria-label="模具装配模型">
                <defs>
                    <clipPath id="hole"><ellipse cx="910" cy="360" rx="55" ry="21"/></clipPath>
                    <clipPath id="inside"><path d="M646 641 822 722V876L646 795z"/></clipPath>
                    <linearGradient id="wall"><stop offset="0" stop-color="#0a7f69"/><stop offset="1" stop-color="#04644f"/></linearGradient>
                    <g id="turn" stroke="#000" stroke-width="1.500">
                        <path d="M0 1Q28 15 60-4V2Q30 22 1 9-1 5 0 1z" fill="#3f3ffc"/>
                        <path d="M0 8Q28 22 60 2V9Q30 28 1 15-1 12 0 8z" fill="#2525b4"/>
                    </g>
                    <g id="screw" stroke="#000">
                        <ellipse rx="17" ry="6" fill="#111" stroke-width="2"/>
                        <ellipse cy="1" rx="16" ry="5" fill="#08f008" stroke="none"/>
                        <path d="M-9 1-6-2H6l3 3-4 3H-6z" fill="#08a808"/>
                        <path d="M-1-2V4"/>
                    </g>
                    <g id="slot" stroke="#000">
                        <path d="M989 572 1024 562V625L989 635z" fill="#5d5280" stroke-width="2"/>
                        <path d="M983 638 989 636V633L1020 624 1029 623V630L983 643z" fill="#ffb3b0" stroke-width="1.500"/>
                        <path d="M1020 624 1029 630V623z" fill="#a85a58" stroke-width="1.500"/>
                    </g>
                </defs>

                <!-- bottom plate -->
                <path d="M567 760 591 752 901 820 1229 795 1252 806 901 912z" fill="#fff"/>
                <path d="M567 760 901 912V947L567 793z" fill="#b3b4b3"/>
                <path d="M901 912 1252 806V840L901 947z" fill="#d0d2d0"/>
                <path d="M567 760 901 912 1252 806M901 912V946" class="edge"/>

                <!-- opening with ejector plates and springs -->
                <path d="M646 641 822 722V876L646 795z" fill="#fff"/>
                <g clip-path="url(#inside)">
                    <path d="M646 641 758 692 648 726z" fill="#d0d2d0"/>
                    <path d="M648 726 758 692" class="edge"/>
                    <ellipse cx="706" cy="728" rx="14" ry="3" fill="#d8cc20" stroke="#000"/>
                    <ellipse cx="673" cy="727" rx="7" ry="3" fill="#2b2be0" stroke="#000"/>
                    <path d="M716 725 735 717V726L725 733z" fill="#2525b4" stroke="#000"/>
                    <use href="#turn" x="675" y="641"/><use href="#turn" x="675" y="655"/><use href="#turn" x="675" y="669"/><use href="#turn" x="675" y="683"/><use href="#turn" x="675" y="697"/><use href="#turn" x="675" y="711"/>
                    <use href="#turn" x="803" y="699"/><use href="#turn" x="803" y="713"/><use href="#turn" x="803" y="727"/><use href="#turn" x="803" y="741"/><use href="#turn" x="803" y="755"/><use href="#turn" x="803" y="769"/>
                    <path d="M648 726 820 805V833L648 755z" fill="#8e98a0"/>
                    <path d="M648 755 820 833V868L648 790z" fill="#b099a0"/>
                    <path d="M648 726 820 805M648 755 820 833M648 790 820 868M807 796l8-2M811 799l10-1" class="edge"/>
                    <ellipse cx="820" cy="796" rx="6" ry="3" fill="#3c3cfa"/>
                    <path d="M648 726V790M820 805V868" stroke="#000" stroke-width="3"/>
                </g>

                <!-- spacer blocks -->
                <path d="M591 616 646 641V795L591 770z" fill="#b3b4b3"/>
                <path d="M822 722 877 747V902L822 876z" fill="#b3b4b3"/>
                <path d="M877 747 1229 640V795L877 902z" fill="#d0d2d0"/>
                <path d="M646 641V795M822 722V876M877 747V902M591 752V770M877 902 1229 795" class="edge"/>

                <!-- red plate -->
                <path d="M591 517 877 648V747L591 616z" fill="#b5625f"/>
                <path d="M877 648 1229 542V640L877 747z" fill="#d87876"/>
                <path d="M591 616 877 747 1229 640M877 648V747" class="edge"/>

                <!-- blue plate -->
                <path d="M591 395 877 528V648L591 517z" fill="#6990b9"/>
                <path d="M877 528 1229 438V542L877 648z" fill="#7aaadb"/>
                <path d="M877 530V648" class="edge"/>
                <path d="M591 517 877 648 1229 542" fill="none" stroke="#000" stroke-width="3"/>

                <!-- holes and slots -->
                <g stroke="#000" stroke-width="1.500">
                    <ellipse cx="734" cy="522" rx="7" ry="12" transform="rotate(-12 734 522)" fill="#b5e2f8"/>
                    <ellipse cx="734" cy="632" rx="7" ry="12" transform="rotate(-12 734 632)" fill="#f6b3ae"/>
                    <g fill="#858682">
                        <ellipse cx="1036" cy="663" rx="7" ry="9" transform="rotate(15 1036 663)"/>
                        <ellipse cx="1071" cy="652" rx="7" ry="9" transform="rotate(15 1071 652)"/>
                        <ellipse cx="1036" cy="496" rx="7" ry="8"/>
                        <ellipse cx="1071" cy="485" rx="7" ry="8"/>
                    </g>
                </g>
                <use href="#slot"/>
                <use href="#slot" x="94" y="-29"/>

                <!-- top plate -->
                <path d="M567 350 901 505V541L567 385z" fill="#b8b6b5"/>
                <path d="M901 505 1252 398V432L901 541z" fill="#d0d2d0"/>
                <path d="M567 350 918 243 1252 398 901 505z" fill="#fff"/>
                <path d="M567 350 901 505 1252 398M567 385 901 541 1252 432" class="edge"/>
                <use href="#screw" x="877" y="296"/><use href="#screw" x="714" y="346"/><use href="#screw" x="1106" y="402"/><use href="#screw" x="944" y="451"/>

                <!-- locating ring -->
                <g stroke="#000" stroke-width="1.500">
                    <path d="M835 360V374A75 28 0 0 0 985 374V360z" fill="#04806a"/>
                    <ellipse cx="910" cy="360" rx="75" ry="28" fill="#08bd98"/>
                    <path d="M835 361A75 28 0 0 0 985 361" fill="none" stroke-width="3"/>
                    <ellipse cx="910" cy="360" rx="55" ry="21" fill="url(#wall)" stroke-width="2"/>
                    <ellipse cx="910" cy="380" rx="55" ry="21" fill="#fff" clip-path="url(#hole)"/>
                    <g fill="#1c3a10" stroke-width="2">
                        <ellipse cx="870" cy="341" rx="7" ry="3"/>
                        <ellipse cx="951" cy="379" rx="7" ry="3"/>
                    </g>
                </g>

                <!-- work coordinate system -->
                <path d="M908 512V488l2-10 3 10v24z" fill="#6b86cf"/>
                <path d="M917 527 940 519 951 518 943 523z" fill="#8fd08f"/>
                <path d="M916 531 935 537 945 545 932 541z" fill="#d97c7c"/>
                <g class="axis">
                    <text x="914" y="475" fill="#2447e0">ZC</text>
                    <text x="939" y="511" fill="#3c9a3c">YC</text>
                    <text x="930" y="557" fill="#d8202c">XC</text>
                </g>

                <!-- preselected body -->
                <g fill="none" stroke="#ff9c3c" stroke-width="3">
                    <path d="M811 482 858 467 907 488 921 512V555L882 566 857 557 811 537z"/>
                    <path d="M811 482 824 488 872 473 858 467V478M872 473 907 488V544M824 488V543"/>
                    <path d="M811 487 858 473 902 492 916 514V552L882 561 857 552 816 533V487"/>
                </g>
                <g fill="none" stroke="#ff9c3c" stroke-width="2">
                    <path d="M907 488 897 492 858 477 830 486 869 501V556M897 492V547M869 501 897 492M874 503V556M882 515 921 512M882 515V566M882 515 869 501M857 502V557L921 537"/>
                    <path d="M832 537 872 524M828 532 866 520M845 545 898 530M862 552 912 538M832 486V543M836 486V544M868 482V525M872 482V525M891 494V548M903 498V550M811 537 857 520M868 508 907 488M884 528 921 518M857 526 882 545 921 535"/>
                    <path d="M886 515V566M892 504 916 514M872 525 907 544"/>
                    <ellipse cx="826" cy="497" rx="11" ry="15"/>
                    <ellipse cx="838" cy="500" rx="10" ry="15"/>
                    <ellipse cx="828" cy="496" rx="7" ry="10"/>
                </g>

                <!-- corner marks -->
                <path d="M888 904l4-2 12 5 11-4 4 1-15 6z" class="edge"/>

                <!-- view triad -->
                <path d="M397 875 412 867 428 874V895L413 903 397 896z" fill="#8e9894" stroke="#a5b0a8"/>
                <path d="M397 875 413 881 428 874M413 881V903" fill="none" stroke="#b8c2bc"/>
                <path d="M428 887l3-6" stroke="#3a9a3a" stroke-width="2"/>
                <path d="M392 893V868l2-6 2 6v25z" fill="#1c3ce0"/>
                <path d="M395 893 412 901 419 907 409 905z" fill="#e02020"/>
                <circle cx="393" cy="896" r="4" fill="#eee"/>
                <g class="axis small"><text x="390" y="859" fill="#2447ff">Z</text><text x="418" y="913" fill="#e02020">X</text></g>
            </svg>

            <!-- Input method bar -->
            <div class="ime">
                <div class="ime-logo"><svg viewBox="0 0 32 32"><g fill="#dde3ea" stroke="#b9c1cc" stroke-width="1.500"><path d="M8 13 3 23l4 1M24 13l5 10-4 1"/><ellipse cx="16" cy="21" rx="9" ry="9"/><ellipse cx="16" cy="9" rx="8" ry="8"/><path d="M7 14q9 6 18 0v4q-9 5-18 0z"/><ellipse cx="13" cy="8" rx="1" ry="2"/><ellipse cx="19" cy="8" rx="1" ry="2"/><path d="M8 29h6M18 29h6"/></g></svg></div>
                <div class="ime-bar">
                    <button title="中文">中</button>
                    <button title="半角"><svg viewBox="0 0 14 14"><path d="M8 1q6 5 2 10-4 3-9 0 7-1 7-10z"/></svg></button>
                    <button title="标点"><svg viewBox="0 0 14 14"><circle cx="4" cy="7" r="2" fill="none" stroke="#1b7fee"/><path d="M9 5h3v3l-2 3H9l1-3H9z"/></svg></button>
                    <button title="设置"><svg viewBox="0 0 14 14"><path d="M1 11l6-5q-1-4 4-5L9 4l2 2 3-2q0 5-5 5l-6 5z"/></svg></button>
                    <button title="剪贴板"><svg viewBox="0 0 14 14"><path d="M1 2h3V0h5v2h3v2H1zM2 5h3v8H2zM6 5h7v9H6z"/><path d="M8 8h4M8 11h4" stroke="#fff"/></svg></button>
                    <button title="表情"><svg viewBox="0 0 14 14"><circle cx="7" cy="7" r="6" fill="none" stroke="#1b7fee" stroke-width="1.500"/><path d="M4 4h1.500v2H4zM8.500 4H10v2H8.500z"/><path d="M4 8q3 4 6 0" fill="none" stroke="#1b7fee" stroke-width="1.500"/></svg></button>
                </div>
            </div>
        </section>
    </main>

    <footer class="bottom-bars">
        <div class="bar">
            <div class="group">
                <span class="grip"></span>
                <button class="tb" title="完成" disabled><svg><use href="#gflag"/></svg></button>
                <button class="tb" title="添加组件"><svg><use href="#addc"/></svg></button>
                <button class="tb" title="移动组件"><svg><use href="#movec"/></svg></button>
                <button class="tb" title="镜像装配"><svg><use href="#mirror"/></svg></button>
                <span class="sep"></span>
                <button class="tb" title="爆炸图"><svg><use href="#three"/></svg></button>
                <button class="drop more" aria-label="工具条选项"></button>
            </div>
        </div>
        <div class="bar sketch">
            <div class="group">
                <span class="grip"></span>
                <button class="tb" title="草图"><svg><use href="#sketch"/></svg></button>
                <button class="text-btn finish" disabled><svg><use href="#gflag"/></svg>完成草图</button>
                <button class="tb" title="轮廓"><svg><use href="#profile"/></svg></button>
                <button class="tb" title="直线"><svg><use href="#sline"/></svg></button>
                <button class="tb" title="圆弧"><svg><use href="#sarc"/></svg></button>
                <button class="tb" title="圆"><svg><use href="#scirc"/></svg></button>
                <button class="tb" title="圆角" disabled><svg><use href="#gfillet"/></svg></button>
                <button class="tb" title="倒斜角" disabled><svg><use href="#gchamf"/></svg></button>
                <button class="tb" title="矩形"><svg><use href="#srect"/></svg></button>
                <button class="tb" title="艺术样条"><svg><use href="#spline"/></svg></button>
                <button class="tb" title="点"><svg><use href="#splus"/></svg></button>
                <button class="tb" title="偏置曲线" disabled><svg><use href="#goff"/></svg></button>
                <button class="drop" aria-label="更多"></button>
                <span class="sep"></span>
                <button class="tb" title="快速修剪" disabled><svg><use href="#gtrim"/></svg></button>
                <button class="tb" title="快速延伸" disabled><svg><use href="#gext"/></svg></button>
                <span class="sep"></span>
                <button class="tb" title="自动判断尺寸" disabled><svg><use href="#gdim"/></svg></button>
                <button class="drop" aria-label="更多"></button>
                <span class="sep"></span>
                <button class="tb" title="约束" disabled><svg><use href="#gpar"/></svg></button>
                <button class="tb" title="设为对称" disabled><svg><use href="#gpt"/></svg></button>
                <button class="drop" aria-label="更多"></button>
                <button class="tb" title="显示约束" disabled><svg><use href="#gtan"/></svg></button>
                <button class="tb" title="自动约束" disabled><svg><use href="#gauto"/></svg></button>
                <button class="drop" aria-label="更多"></button>
                <button class="drop more" aria-label="工具条选项"></button>
            </div>
        </div>
    </footer>
</div>

<script src="script.js"></script>
</body>
</html>
```

FILE: styles.css
```css
* {
    box-sizing: border-box;
}

html, body {
    height: 100%;
    margin: 0;
}

body {
    background: #1c5f96;
    font: 12px/16px "Liberation Sans", "Noto Sans CJK SC", sans-serif;
    color: #111;
    overflow: hidden;
}

button, select, input {
    font: inherit;
    color: inherit;
    margin: 0;
    padding: 0;
}

button {
    border: 0;
    background: none;
}

.sprite {
    position: absolute;
    width: 0;
    height: 0;
}

.window {
    display: flex;
    flex-direction: column;
    height: 100vh;
    padding: 0 4px 8px;
    background: #0a0a0a;
    border-radius: 8px 8px 4px 4px;
    overflow: hidden;
}

/* Title bar */
.titlebar {
    display: flex;
    align-items: center;
    flex: none;
    height: 30px;
    padding: 0 0 2px 2px;
    margin: 0 -4px;
    background: linear-gradient(#55565a, #6b6b70 3px, #4c4c50 9px, #1a1a1b 10px, #121212);
    color: #fff;
}

.app-icon {
    width: 18px;
    height: 18px;
    margin: 0 4px;
}

.titlebar h1 {
    margin: 0;
    flex: 1;
    font: 12px/18px "Noto Sans", "Noto Sans CJK SC", sans-serif;
}

.brand {
    font: bold 12px/18px "DejaVu Sans", sans-serif;
    margin-right: 26px;
}

.win-buttons {
    display: flex;
    gap: 4px;
    margin-right: 5px;
}

.win-buttons button {
    width: 18px;
    height: 18px;
    border-radius: 3px;
    border: 1px solid #777;
    background: linear-gradient(#77787c, #3a3a3c);
}

.win-buttons .close {
    border-color: #f2a090;
    background: linear-gradient(#f39a88, #d9341c);
}

.win-buttons svg {
    display: block;
    width: 16px;
    height: 16px;
}

/* Menu and toolbars */
.top-bars {
    flex: none;
    background: linear-gradient(#eaeaec, #dcddde 45px, #cdd0ce 120px, #c9ccc9);
}

.menubar {
    display: flex;
    align-items: center;
    height: 24px;
    border-bottom: 1px solid #b9babb;
}

.menu-icon {
    width: 16px;
    height: 16px;
    margin-right: 5px;
}

.menubar a {
    display: flex;
    margin-right: 13px;
    color: inherit;
    text-decoration: none;
}

.menubar a span {
    min-width: 18px;
    font-family: "Liberation Serif", serif;
    text-align: center;
}

.mdi-buttons {
    display: flex;
    gap: 2px;
    margin: 0 5px 0 auto;
}

.mdi-buttons button {
    width: 17px;
    height: 17px;
    border: 1px solid #666;
    border-radius: 3px;
    background: #f3f3f4;
}

.mdi-buttons svg {
    display: block;
    width: 15px;
    height: 15px;
    fill: #555;
}

.bar {
    display: flex;
    height: 34px;
    border-top: 1px solid #f8f8f8;
}

.bar.tall {
    height: 62px;
}

.bar.tools {
    height: 35px;
}

.group {
    display: flex;
    align-items: center;
    border-right: 1px solid #b9bbb9;
    padding-right: 1px;
}

.group + .group {
    border-left: 1px solid #fff;
    margin-left: -1px;
}

.group.last {
    flex: 1;
    border-right: 0;
    padding-right: 2px;
}

.group + .apart {
    margin-left: 33px;
}

.group + .apart-wide {
    margin-left: 93px;
}

.grip {
    align-self: stretch;
    flex: none;
    margin: 4px 2px 4px 4px;
    border-left: 2px dotted #9c9e9d;
}

.menubar .grip {
    margin-right: 3px;
}

.sep {
    align-self: stretch;
    flex: none;
    width: 1px;
    margin: 1px 2px 1px 3px;
    background: #fbfbfb;
}

.tb {
    flex: none;
    width: 31px;
    height: 30px;
    display: flex;
    align-items: center;
    justify-content: center;
}

.bar svg {
    width: 24px;
    height: 24px;
    overflow: visible;
}

.text-btn {
    display: flex;
    align-items: center;
    height: 30px;
    white-space: nowrap;
}

.start {
    width: 66px;
    padding-left: 3px;
    gap: 3px;
}

.start i {
    margin-left: 1px;
    border: 3px solid transparent;
    border-top-color: #000;
    border-bottom: 0;
}

.find {
    width: 96px;
    padding-left: 5px;
    gap: 3px;
}

.finish {
    width: 81px;
    padding-left: 2px;
    gap: 4px;
}

button:disabled {
    color: #8a8c8b;
}

.drop {
    flex: none;
    align-self: stretch;
    width: 12px;
    display: flex;
    align-items: center;
    justify-content: center;
}

.drop::after {
    content: "";
    border: 3px solid transparent;
    border-top-color: #000;
    border-bottom: 0;
}

.drop.more {
    align-items: flex-end;
    padding-bottom: 7px;
}

.drop.chevron {
    flex-direction: column;
    align-items: center;
    justify-content: space-between;
    margin-left: 30px;
    font: bold 15px/12px "Liberation Sans", sans-serif;
}

.last .drop.chevron {
    margin-left: auto;
}

.big {
    flex: none;
    align-self: stretch;
    width: 60px;
    padding: 4px 5px 0;
    display: flex;
    flex-direction: column;
    align-items: center;
    gap: 5px;
    line-height: 12px;
}

.big span {
    max-width: 48px;
}

.big.on {
    margin: 1px 0;
    padding-top: 2px;
    border: 1px solid #555;
    border-radius: 3px;
    background: #fff;
}

/* Selection bar */
.selection-bar {
    display: flex;
    align-items: center;
    flex: none;
    height: 26px;
    padding-left: 6px;
    border-top: 2px solid #8e908f;
    background: linear-gradient(#c9ccc9, #dcddde);
}

.combo {
    position: relative;
    width: 109px;
    margin-right: 9px;
}

.combo.wide {
    width: 115px;
    margin-right: 5px;
}

.combo select {
    display: block;
    width: 100%;
    height: 17px;
    appearance: none;
    border: 1px solid #555;
    border-radius: 2px;
    background: #fff;
    color: #000;
}

.combo::after {
    content: "";
    position: absolute;
    top: 1px;
    right: 1px;
    width: 16px;
    height: 15px;
    background: linear-gradient(#b8dcff, #2f7bd8);
    pointer-events: none;
}

.combo::before {
    content: "";
    position: absolute;
    z-index: 1;
    top: 6px;
    right: 4px;
    border: 5px solid transparent;
    border-top: 6px solid #111;
    border-bottom: 0;
    pointer-events: none;
}

.selection-bar button {
    flex: none;
    width: 23px;
    height: 22px;
    display: flex;
    align-items: center;
    justify-content: center;
}

.selection-bar button svg {
    width: 16px;
    height: 16px;
}

.selection-bar .on {
    border: 1px solid #444;
    border-radius: 2px;
    background: #fff;
}

.selection-bar .end {
    width: 12px;
    margin-left: auto;
    margin-right: 2px;
    align-items: flex-end;
    padding-bottom: 3px;
}

/* Prompt line */
.prompt-bar {
    display: flex;
    flex: none;
    height: 24px;
    border-top: 1px solid #f4f4f4;
    border-bottom: 1px solid #777;
    background: #d8dadb;
    line-height: 21px;
}

.prompt-bar strong {
    flex: 1;
    padding-left: 3px;
    white-space: nowrap;
}

.prompt-bar span {
    border-left: 1px solid #fff;
}

.status {
    flex: 1;
}

.cell {
    width: 20px;
}

.cell-wide {
    width: 36px;
}

.cell-icons {
    display: flex;
    align-items: center;
    gap: 5px;
    padding: 0 5px 0 2px;
}

.cell-icons svg {
    width: 15px;
    height: 15px;
}

/* Work area */
.work {
    display: flex;
    flex: 1;
    min-height: 0;
}

.dock {
    flex: none;
    width: 33px;
    padding-top: 16px;
    display: flex;
    flex-direction: column;
    align-items: flex-end;
    gap: 2px;
    background: #a9aaab;
    border-right: 1px solid #8a8b8c;
}

.dock button {
    flex: none;
    width: 26px;
    height: 40px;
    border: 1px solid #77787a;
    border-right: 0;
    border-radius: 4px 0 0 4px;
    background: #ccced0;
}

.dock .active {
    width: 28px;
    background: #e4e5e6;
}

.dock .spaced {
    margin-top: 12px;
}

.dock svg {
    width: 24px;
    height: 24px;
    vertical-align: middle;
}

.navigator {
    flex: none;
    width: 298px;
    display: flex;
    flex-direction: column;
    padding: 0 10px 0 9px;
    background: #e1e3e4;
    border-right: 2px solid #6e6f70;
}

.navigator h2 {
    display: flex;
    align-items: center;
    gap: 13px;
    flex: none;
    height: 30px;
    margin: 0;
    padding-left: 5px;
    font-size: 12px;
}

.navigator h2 svg {
    width: 12px;
    height: 12px;
}

.tree-box {
    flex: 1;
    min-height: 0;
    display: grid;
    grid-template: 1fr 17px / 1fr 17px;
    border: 1px solid #55565a;
    background: #e6e7e8;
}

.tree-view {
    overflow: hidden;
    min-height: 0;
}

.tree-view table {
    width: 100%;
    table-layout: fixed;
    border-collapse: separate;
    border-spacing: 0;
    color: #333;
}

.col-name {
    width: 200px;
}

.tree-view th {
    height: 17px;
    padding: 0 6px;
    line-height: 15px;
    font-weight: normal;
    text-align: left;
    border-bottom: 1px solid #777;
    background: #d9dbdc;
}

.tree-view th + th {
    padding-left: 5px;
    border-left: 1px solid #999;
}

.sort {
    padding-left: 8px;
}

.tree-view td {
    height: 20px;
    padding: 0;
    border-bottom: 1px dashed #d4d5d8;
    background: #fff;
}

.tree-view td + td {
    border-left: 1px dashed #c8c9cc;
}

.tree-view tr:nth-child(even) td {
    background: #f9f8fb;
}

.root, .node {
    display: flex;
    align-items: center;
    height: 19px;
}

.root {
    padding-left: 5px;
}

.root button {
    width: 9px;
    height: 9px;
    margin-right: 6px;
    border: 1px solid #888;
    line-height: 6px;
}

.root svg {
    width: 16px;
    height: 16px;
    margin-right: 3px;
}

.node {
    padding-left: 30px;
}

.twig {
    width: 11px;
    height: 20px;
    padding-right: 2px;
    border-left: 1px dotted #9a9b9c;
    background: linear-gradient(90deg, #9a9b9c 50%, transparent 50%) 1px 9px / 2px 1px repeat-x;
    background-clip: content-box;
}

.node input {
    appearance: none;
    width: 12px;
    height: 12px;
    border: 1px solid #000;
    background: #fff;
}

.node input:checked::before {
    content: "";
    display: block;
    width: 10px;
    height: 10px;
    background: #0cad22;
    clip-path: polygon(0 40%, 25% 35%, 40% 58%, 80% 5%, 100% 5%, 50% 95%, 32% 95%);
}

.node svg {
    width: 16px;
    height: 16px;
    margin: 0 1px 0 2px;
}

.node label {
    flex: 1;
    padding-left: 2px;
    line-height: 20px;
}

.node label span {
    margin-left: 8px;
}

.link label {
    color: #2f5ff0;
}

.tree-view .selected label, .tree-view .selected td + td {
    background: #2f92f3;
    color: #fff;
}

.scroll-v, .scroll-h {
    display: flex;
    align-items: center;
}

.scroll-v {
    flex-direction: column;
    padding: 24px 1px 7px 0;
}

.scroll-h {
    grid-column: 1 / -1;
    padding: 0 24px 0 7px;
}

.scroll-v b {
    width: 15px;
    height: 25px;
    margin: 12px 0 auto;
    border: 1px solid #88898b;
    border-radius: 2px;
    background: repeating-linear-gradient(#555 0 1px, transparent 1px 3px) 50% 50% / 7px 9px no-repeat, linear-gradient(90deg, #f0f0f1, #bbb);
}

.scroll-h b {
    flex: none;
    width: 188px;
    height: 15px;
    margin: 0 auto 0 8px;
    border: 1px solid #88898b;
    border-radius: 2px;
    background: repeating-linear-gradient(90deg, #555 0 1px, transparent 1px 3px) 50% 50% / 9px 7px no-repeat, linear-gradient(#f0f0f1, #b4b5b7);
}

.scroll-v i, .scroll-h i {
    border: 4px solid transparent;
}

.scroll-v .up {
    border-top: 0;
    border-bottom-color: #333;
}

.scroll-v .down {
    border-bottom: 0;
    border-top-color: #333;
}

.scroll-h .left {
    border-left: 0;
    border-right-color: #333;
}

.scroll-h .right {
    border-right: 0;
    border-left-color: #333;
}

.splitter {
    flex: none;
    height: 18px;
    padding-top: 4px;
}

.splitter span {
    display: block;
    width: 50px;
    height: 5px;
    margin: 0 auto;
    border: 1px solid #a8a9ab;
    background: #c9cbcc;
}

/* Graphics window */
.viewport {
    position: relative;
    flex: 1;
    min-width: 0;
    background: #000;
}

.model {
    display: block;
    width: 100%;
    height: 100%;
}

.edge {
    fill: none;
    stroke: #000;
    stroke-width: 1.5;
}

.axis {
    font: 13px "Noto Sans", sans-serif;
}

.axis.small {
    font-size: 11px;
}

.ime {
    position: absolute;
    right: 248px;
    bottom: 4px;
    display: flex;
    align-items: flex-end;
    color: #1b7fee;
}

.ime-logo {
    width: 40px;
    height: 40px;
    padding: 2px;
    border: 2px solid #1b7fee;
    background: #eaf0f8;
}

.ime-logo svg {
    display: block;
    width: 32px;
    height: 32px;
}

.ime-bar {
    display: flex;
    align-items: center;
    justify-content: space-around;
    width: 127px;
    height: 25px;
    border: 1px solid #1b7fee;
    background: #fff;
}

.ime-bar button {
    width: 20px;
    font-weight: bold;
    font-size: 13px;
}

.ime-bar svg {
    display: block;
    width: 14px;
    height: 14px;
    margin: 0 auto;
    fill: #1b7fee;
}

/* Bottom toolbars */
.bottom-bars {
    flex: none;
    border-bottom: 1px solid #777;
    background: linear-gradient(#e5e6e8, #cdd0ce 40px, #ccd0cd);
}

.bottom-bars .sketch {
    padding-left: 151px;
}
```

FILE: script.js
```javascript
// Feature list of the part navigator, in history order
const features = {
    10: ['offset', '偏置面'],
    14: ['sub', '求差'],
    15: ['delface', '删除面'],
    16: ['offset', '偏置面'],
    17: ['offset', '偏置面'],
    18: ['blend', '边倒圆'],
    19: ['sub', '求差'],
    20: ['sub', '求差'],
    21: ['sub', '求差']
};

const tree = document.getElementById('tree');
let rows = '';

for (let i = 0; i <= 30; i++) {
    const [icon, name] = features[i] || ['body', '体'];
    const state = i === 0 ? 'selected' : i === 14 ? 'link' : '';
    rows += `<tr class="${state}">
        <td><div class="node"><i class="twig"></i><input type="checkbox" id="f${i}" checked>
        <svg><use href="#${icon}"/></svg><label for="f${i}">${name}<span>(${i})</span></label></div></td>
        <td></td>
    </tr>`;
}

tree.insertAdjacentHTML('beforeend', rows);
```
